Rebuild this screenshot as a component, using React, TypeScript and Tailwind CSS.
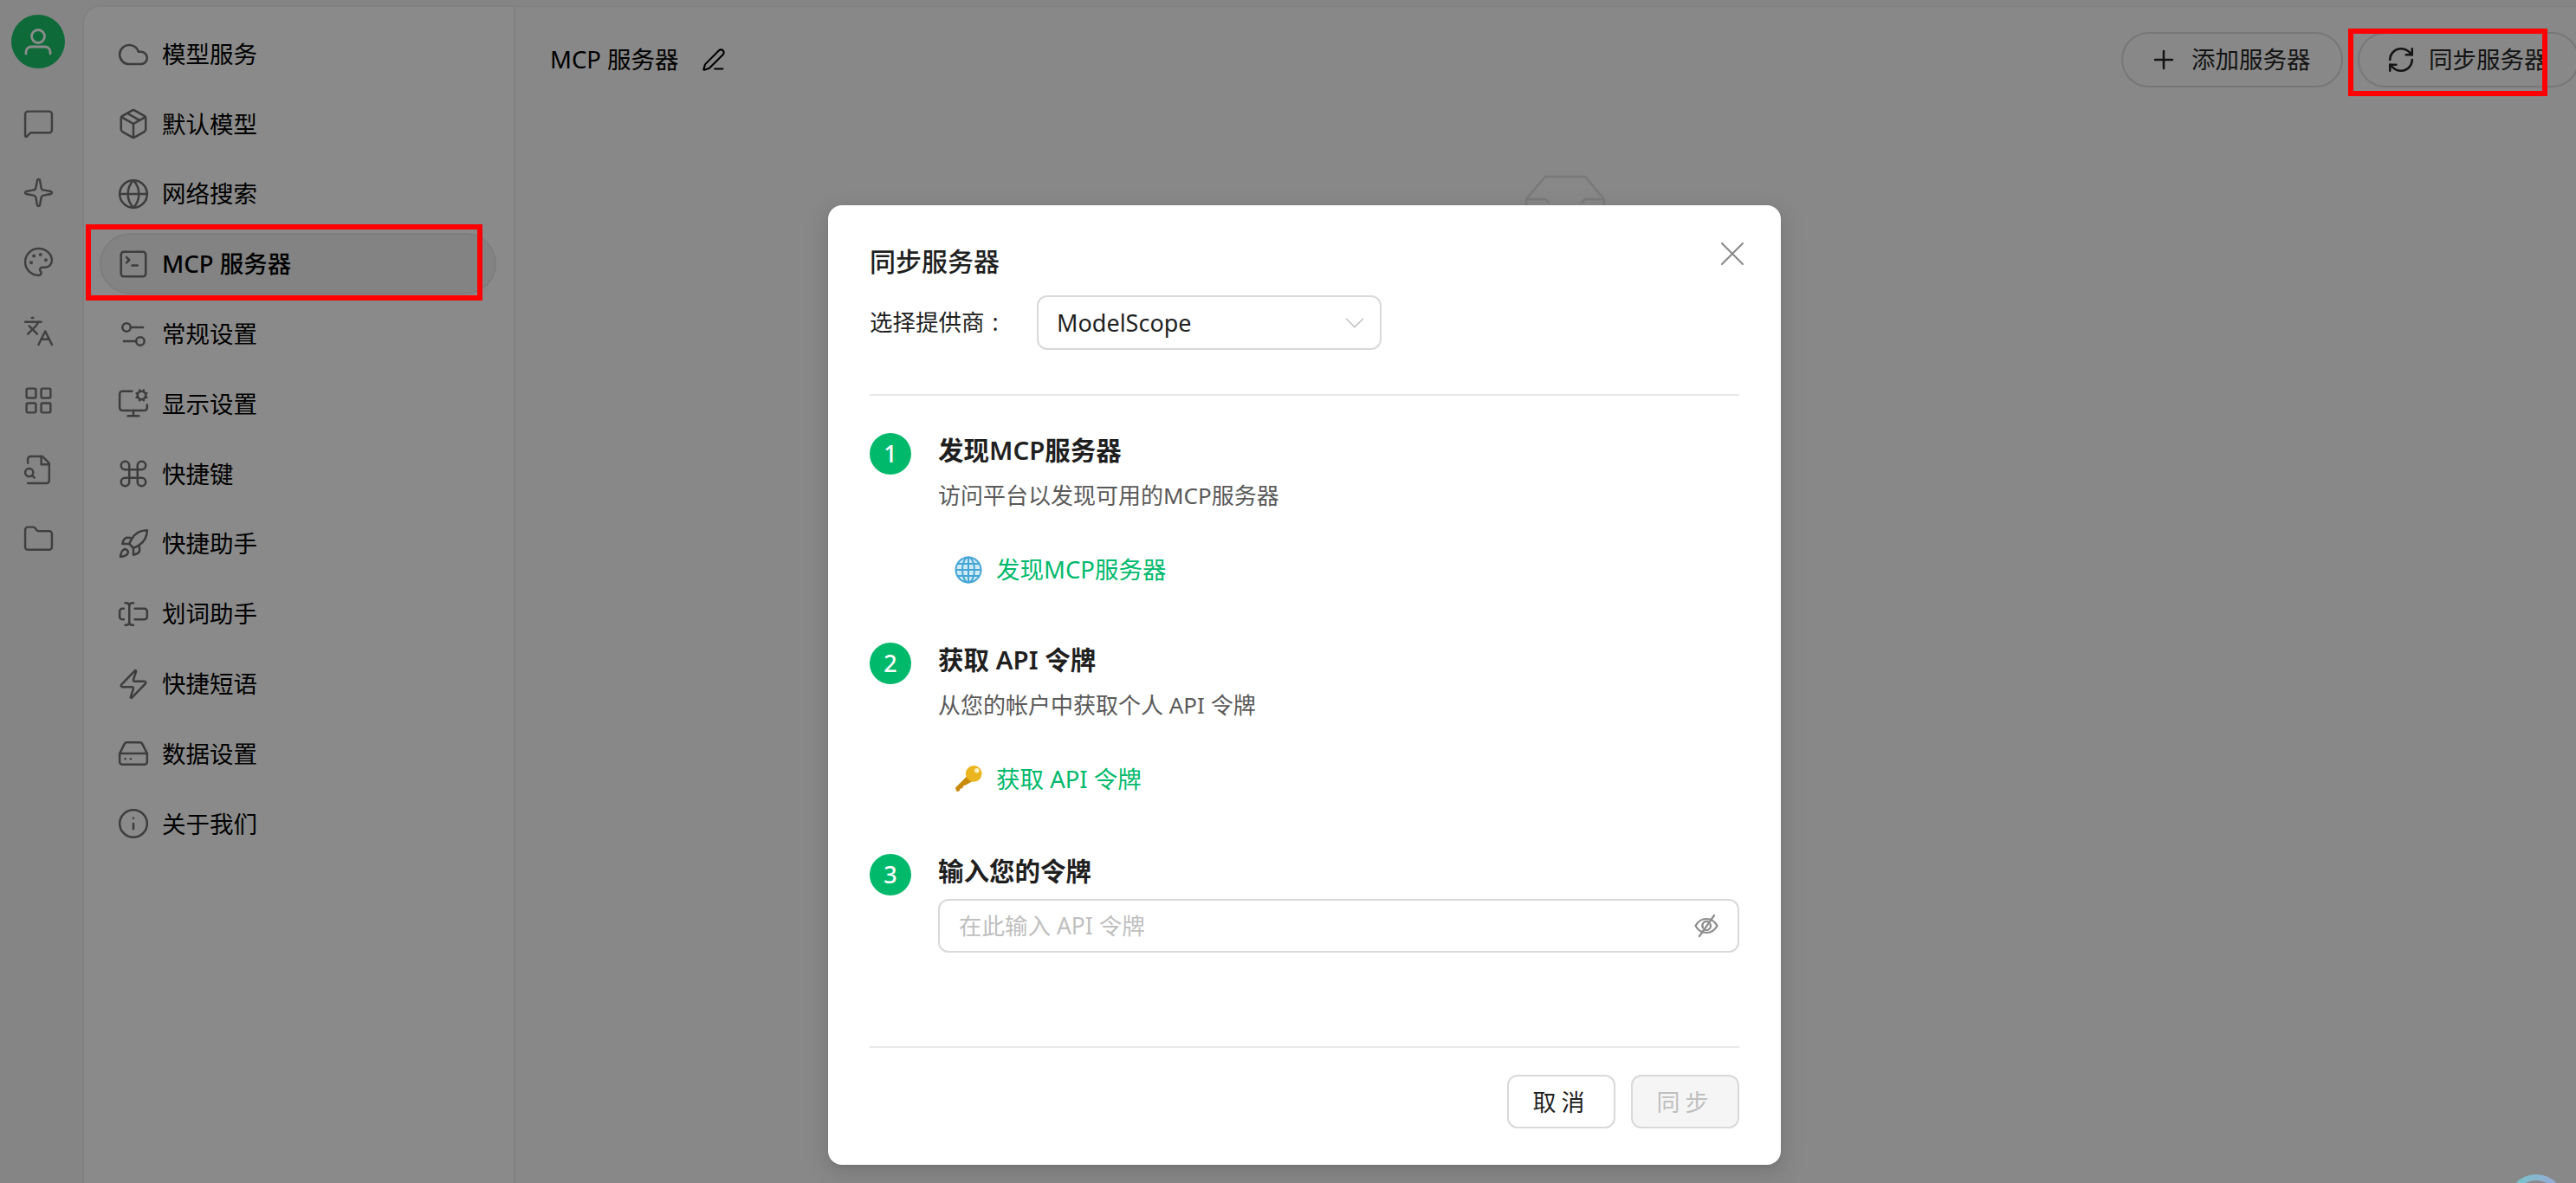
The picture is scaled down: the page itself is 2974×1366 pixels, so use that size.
import React from "react";
import {
  Cloud, Package, Globe, SquareTerminal, Settings2, MonitorCog, Command, Rocket, TextCursorInput, Zap, HardDrive, Info,
  MessageSquare, Sparkle, Palette, Languages, LayoutGrid, Folder, Plus, RefreshCw, PenLine, X, ChevronDown,
} from "lucide-react";

const font = { fontFamily: '"Noto Sans","Noto Sans CJK SC",sans-serif' };

function FileSearchOld({ size, strokeWidth }: { size: number; strokeWidth: number }) {
  return (
    <svg width={size} height={size} viewBox="0 0 24 24" fill="none" stroke="currentColor" strokeWidth={strokeWidth} strokeLinecap="round" strokeLinejoin="round">
      <path d="M4 22h14a2 2 0 0 0 2-2V7l-5-5H6a2 2 0 0 0-2 2v3" />
      <path d="M14 2v6h6" />
      <path d="M5 17a3 3 0 1 0 0-6 3 3 0 0 0 0 6z" />
      <path d="m9 18-1.5-1.5" />
    </svg>
  );
}

const railIcons = [MessageSquare, Sparkle, Palette, Languages, LayoutGrid, FileSearchOld, Folder];
const navItems: [any, string, boolean?][] = [
  [Cloud, "模型服务"],
  [Package, "默认模型"],
  [Globe, "网络搜索"],
  [SquareTerminal, "MCP 服务器", true],
  [Settings2, "常规设置"],
  [MonitorCog, "显示设置"],
  [Command, "快捷键"],
  [Rocket, "快捷助手"],
  [TextCursorInput, "划词助手"],
  [Zap, "快捷短语"],
  [HardDrive, "数据设置"],
  [Info, "关于我们"],
];

function GlobeEmoji() {
  return (
    <svg width="32" height="32" viewBox="0 0 32 32" fill="none">
      <circle cx="16" cy="16" r="15" fill="#cfeaf8" />
      <circle cx="16" cy="16" r="14.5" stroke="#45a6d6" strokeWidth="2" />
      <ellipse cx="16" cy="16" rx="7" ry="14.5" stroke="#45a6d6" strokeWidth="2" />
      <path d="M16 1.5v29M1.5 16h29M3.5 9h25M3.500 23h25" stroke="#45a6d6" strokeWidth="2" />
    </svg>
  );
}

function KeyEmoji() {
  return (
    <svg width="36" height="36" viewBox="0 0 36 36" fill="none">
      <path d="M17 13 1 29l2 5 3.500-1 1-3 3-.8 1-3 3-.8L24 20z" fill="#c98a0c" />
      <circle cx="25" cy="10.500" r="10.500" fill="#ebb51f" />
      <circle cx="29" cy="6.500" r="3" fill="#fff3c4" />
    </svg>
  );
}

function EyeSlash() {
  return (
    <svg width="30" height="30" viewBox="0 0 30 30" fill="none" stroke="#8c8c8c" strokeWidth="2.2" strokeLinecap="round">
      <path d="M2.500 15C5.500 9.500 10 7 15 7s9.500 2.500 12.500 8c-3 5.500-7.500 8-12.500 8S5.500 20.500 2.500 15z" />
      <path d="M11 17.500a5 5 0 0 1 6.500-7M19.500 13a5 5 0 0 1-5.500 7" />
      <path d="M7 27 24 3" />
    </svg>
  );
}

function Step({ n, title, desc, link, icon }: { n: number; title: string; desc: string; link: string; icon: React.ReactNode }) {
  return (
    <div className="flex gap-[31px]">
      <div className="flex h-[48px] w-[48px] shrink-0 items-center justify-center rounded-full bg-[#00b96b] text-[27px] font-medium text-white">{n}</div>
      <div className="flex flex-col">
        <div className="flex h-[40px] items-center text-[29.5px] font-semibold leading-none text-[#1f1f1f]">{title}</div>
        <div className="mt-[12px] flex h-[40px] items-center text-[26px] leading-none text-[#595959]">{desc}</div>
        <div className="mt-[46px] flex h-[40px] items-center gap-[16px] pl-[19px] text-[27.5px] leading-none text-[#00b96b]">
          <div className="flex w-[32px] shrink-0 items-center justify-center">{icon}</div>
          <span>{link}</span>
        </div>
      </div>
    </div>
  );
}

export default function App() {
  return (
    <div className="relative flex h-screen w-full overflow-hidden bg-[#f2f2f2] text-black" style={font}>
      {/* rail */}
      <div className="flex w-[95px] shrink-0 flex-col items-center pr-[7px] pt-[17px]">
        <div className="flex h-[62px] w-[62px] items-center justify-center rounded-full bg-[#1cc26b]">
          <svg width="36" height="36" viewBox="0 0 36 36" fill="none" stroke="#ffffff" strokeWidth="2.8" strokeLinecap="round">
            <circle cx="18" cy="12" r="7.500" />
            <path d="M4 32v-2c0-3.300 2.700-6 6-6h16c3.300 0 6 2.700 6 6v2" />
          </svg>
        </div>
        <div className="mt-[23px] flex flex-col">
          {railIcons.map((I, i) => (
            <div key={i} className="flex h-[80px] w-[62px] items-center justify-center text-[#757575]">
              <I size={37} strokeWidth={1.6} />
            </div>
          ))}
        </div>
      </div>

      {/* content frame */}
      <div className="mt-[6px] flex min-w-0 flex-1 rounded-tl-[20px] border-l-2 border-t-2 border-[#ececec] bg-[#f7f7f7]">
        <div className="flex w-[498px] shrink-0 flex-col gap-[9.8px] rounded-tl-[20px] border-r-2 border-[#ececec] bg-[#fbfbfb] pl-[18px] pr-[20px] pt-[19px]">
          {navItems.map(([I, label, active]) => (
            <div
              key={label}
              className={`flex h-[71px] items-center gap-[14px] rounded-full border-2 pl-[18px] text-[27.5px] ${active ? "border-[#e4e4e4] bg-[#eeeeee] font-medium" : "border-transparent"}`}
            >
              <I size={38} strokeWidth={1.6} className="shrink-0 text-[#707070]" />
              <span className="leading-none">{label}</span>
            </div>
          ))}
        </div>

        <div className="flex min-w-0 flex-1 flex-col">
          <div className="flex h-[121px] shrink-0 items-center justify-between pl-[40px]">
            <div className="flex items-center gap-[26px] text-[27.5px] leading-none">
              <span>MCP 服务器</span>
              <PenLine size={28} strokeWidth={1.8} />
            </div>
            <div className="mr-[-4px] flex items-center gap-[17px] text-[27.5px] leading-none text-[#262626]">
              <div className="flex h-[64px] w-[256px] items-center gap-[15px] rounded-full border-2 border-[#d9d9d9] pl-[30px]">
                <Plus size={34} strokeWidth={1.8} />
                <span>添加服务器</span>
              </div>
              <div className="flex h-[64px] w-[256px] items-center gap-[15px] rounded-full border-2 border-[#d9d9d9] pl-[31px]">
                <RefreshCw size={34} strokeWidth={1.8} />
                <span>同步服务器</span>
              </div>
            </div>
          </div>
          <div className="ml-[1166px] mt-[73px]">
            <svg width="92" height="70" viewBox="0 0 92 70" fill="none" stroke="#dcdcdc" strokeWidth="2.4">
              <path d="M1 28 23 2h46l22 26v40H1z" />
              <path d="M1 28h20c3 0 5 2 6 5M91 28H71c-3 0-5 2-6 5" />
            </svg>
          </div>
        </div>
      </div>

      {/* mask */}
      <div className="absolute inset-0 bg-black/45" />

      {/* floating button peeking out at the bottom */}
      <div className="absolute left-[2895px] top-[1356px] h-[66px] w-[66px] rounded-full bg-gradient-to-r from-[#6fc6c9] to-[#9aa6d6] p-[7px]">
        <div className="h-full w-full rounded-full bg-[#8a8a8a]" />
      </div>

      {/* dialog */}
      <div className="absolute left-[956px] top-[237px] flex h-[1108px] w-[1100px] flex-col rounded-[16px] bg-white px-[48px] shadow-[0_6px_16px_rgba(0,0,0,0.08),0_3px_6px_-4px_rgba(0,0,0,0.12),0_9px_28px_8px_rgba(0,0,0,0.05)]">
        <X size={48} strokeWidth={1.1} className="absolute right-[32px] top-[32px] text-[#8c8c8c]" />
        <div className="mt-[47px] flex h-[36px] items-center text-[30px] font-medium leading-none text-[#1f1f1f]">同步服务器</div>
        <div className="mt-[21px] flex items-center text-[26.5px] leading-none text-[#1f1f1f]">
          <span className="w-[193px]">选择提供商<span className="ml-[9px]">:</span></span>
          <div className="flex h-[63px] w-[398px] items-center justify-between rounded-[12px] border-2 border-[#d9d9d9] pl-[21px] pr-[10px]">
            <span className="text-[27px]">ModelScope</span>
            <ChevronDown size={38} strokeWidth={0.9} className="text-[#bfbfbf]" />
          </div>
        </div>
        <div className="mt-[51px] h-[2px] shrink-0 bg-[#e8e8e8]" />

        <div className="mt-[43px] flex flex-col gap-[64px]">
          <Step n={1} title="发现MCP服务器" desc="访问平台以发现可用的MCP服务器" link="发现MCP服务器" icon={<GlobeEmoji />} />
          <Step n={2} title="获取 API 令牌" desc="从您的帐户中获取个人 API 令牌" link="获取 API 令牌" icon={<KeyEmoji />} />
        </div>

        <div className="mt-[66px] flex gap-[31px]">
          <div className="flex h-[48px] w-[48px] shrink-0 items-center justify-center rounded-full bg-[#00b96b] text-[27px] font-medium text-white">3</div>
          <div className="flex flex-1 flex-col">
            <div className="flex h-[40px] items-center text-[29.5px] font-semibold leading-none text-[#1f1f1f]">输入您的令牌</div>
            <div className="mt-[12px] flex h-[62px] items-center justify-between rounded-[12px] border-2 border-[#d9d9d9] pl-[22px] pr-[21px] text-[26.5px] leading-none text-[#bfbfbf]">
              <span>在此输入 API 令牌</span>
              <EyeSlash />
            </div>
          </div>
        </div>

        <div className="mt-[108px] h-[2px] shrink-0 bg-[#e8e8e8]" />
        <div className="mt-[31px] flex justify-end gap-[18px] text-[27px] leading-none">
          <div className="flex h-[62px] w-[125px] items-center justify-center rounded-[12px] border-2 border-[#d9d9d9] tracking-[6px] text-[#1f1f1f]">取消</div>
          <div className="flex h-[62px] w-[125px] items-center justify-center rounded-[12px] border-2 border-[#d9d9d9] bg-[#f5f5f5] tracking-[6px] text-[#bfbfbf]">同步</div>
        </div>
      </div>

      {/* annotation rectangles */}
      <div className="absolute left-[99px] top-[259px] h-[88px] w-[458px] border-[6px] border-[#ff0000]" />
      <div className="absolute left-[2711px] top-[33px] h-[78px] w-[230px] border-[6px] border-[#ff0000]" />
    </div>
  );
}
